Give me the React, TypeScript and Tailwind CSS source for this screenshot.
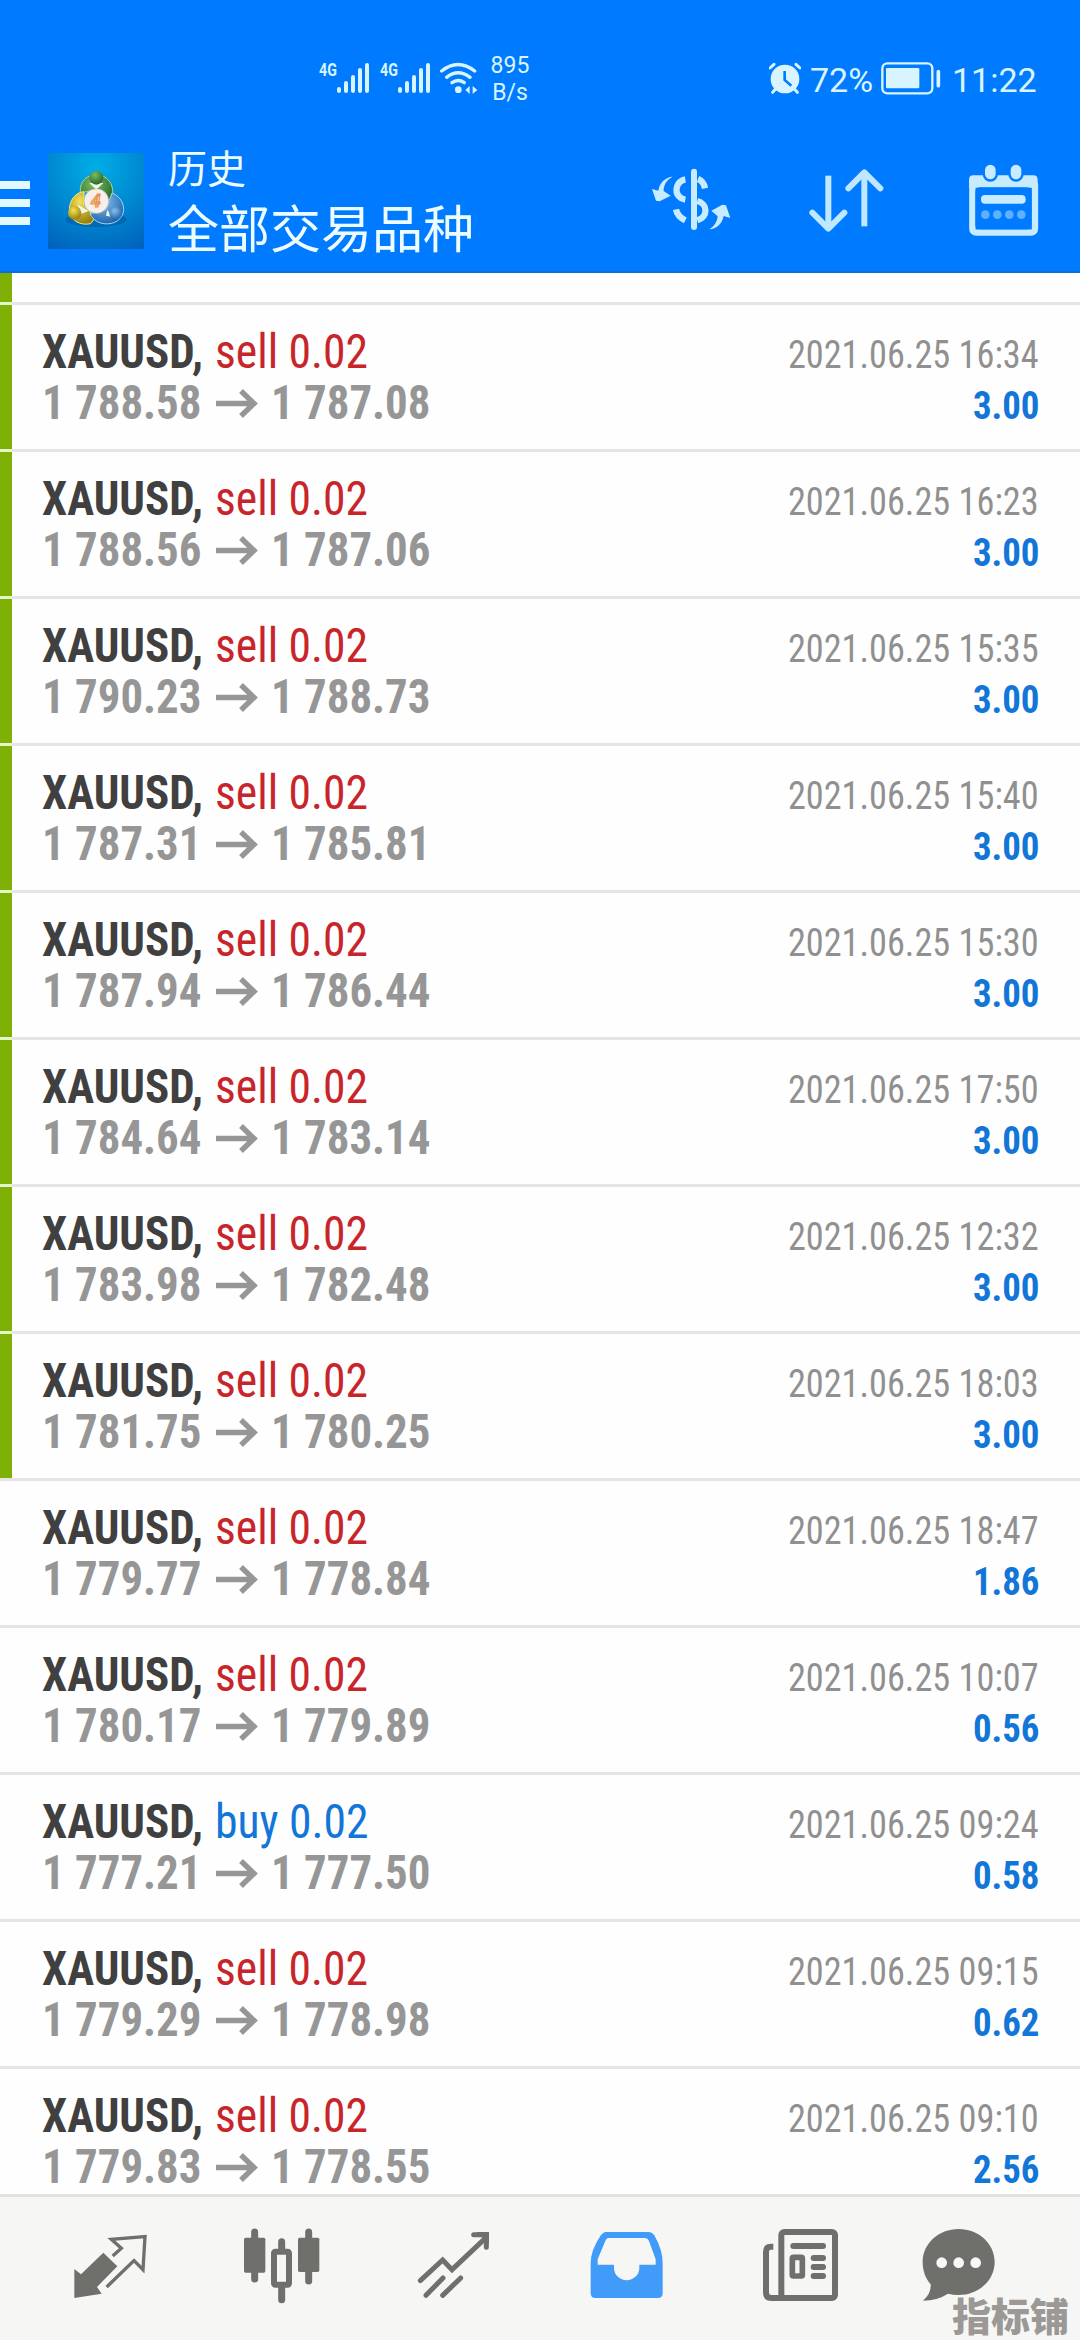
import React from "react";

type Trade = { side: "sell" | "buy"; open: string; close: string; time: string; profit: string; marked: boolean };

const trades: Trade[] = [
  { side: "sell", open: "1 788.58", close: "1 787.08", time: "16:34", profit: "3.00", marked: true },
  { side: "sell", open: "1 788.56", close: "1 787.06", time: "16:23", profit: "3.00", marked: true },
  { side: "sell", open: "1 790.23", close: "1 788.73", time: "15:35", profit: "3.00", marked: true },
  { side: "sell", open: "1 787.31", close: "1 785.81", time: "15:40", profit: "3.00", marked: true },
  { side: "sell", open: "1 787.94", close: "1 786.44", time: "15:30", profit: "3.00", marked: true },
  { side: "sell", open: "1 784.64", close: "1 783.14", time: "17:50", profit: "3.00", marked: true },
  { side: "sell", open: "1 783.98", close: "1 782.48", time: "12:32", profit: "3.00", marked: true },
  { side: "sell", open: "1 781.75", close: "1 780.25", time: "18:03", profit: "3.00", marked: true },
  { side: "sell", open: "1 779.77", close: "1 778.84", time: "18:47", profit: "1.86", marked: false },
  { side: "sell", open: "1 780.17", close: "1 779.89", time: "10:07", profit: "0.56", marked: false },
  { side: "buy", open: "1 777.21", close: "1 777.50", time: "09:24", profit: "0.58", marked: false },
  { side: "sell", open: "1 779.29", close: "1 778.98", time: "09:15", profit: "0.62", marked: false },
  { side: "sell", open: "1 779.83", close: "1 778.55", time: "09:10", profit: "2.56", marked: false },
];

function Signal() {
  return (
    <div className="flex h-[31px] w-[50px]">
      <span className="w-[18px] origin-left scale-x-75 text-[19px] font-bold leading-[16px]">4G</span>
      <svg className="h-[31px] w-[32px]" viewBox="0 0 32 31" stroke="currentColor" strokeWidth="4" strokeLinecap="round">
        <path d="M2 27v2M9 21v8M16 15v14M23 8v21M30 3v26" />
      </svg>
    </div>
  );
}

function StatusBar() {
  return (
    <div className="flex h-[130px] items-start pt-[62px] text-[#d8f5ff]">
      <div className="ml-[319px] flex gap-[11px]">
        <Signal />
        <Signal />
      </div>
      <svg className="ml-[10px] h-[32px] w-[39px]" viewBox="0 0 117 96" fill="none" stroke="currentColor" strokeWidth="10" strokeLinecap="round">
        <path d="M5 27Q54-12 104 27M20 46Q54 19 90 46M36 62Q54 49 73 62" />
        <circle cx="55" cy="83" r="10" fill="currentColor" stroke="none" />
        <path d="M76 84l13-12v24zM98 72v24l14-12z" fill="currentColor" stroke="none" />
      </svg>
      <div className="-mt-[10px] ml-[11px] flex w-[40px] flex-col items-center text-[23px] leading-[27px]">
        <span>895</span>
        <span>B/s</span>
      </div>
      <svg className="ml-[239px] h-[32px] w-[32px]" viewBox="84 66 96 96">
        <circle cx="132" cy="117" r="43" fill="currentColor" />
        <path d="M87 84l12-11M165 73l12 11M103 148l-8 9M161 148l8 9" stroke="currentColor" strokeWidth="9" strokeLinecap="round" />
        <path d="M131 93v27l20 17" fill="none" stroke="#007aff" strokeWidth="8" />
      </svg>
      <span className="-mt-[1px] ml-[9px] w-[66px] text-[34px] leading-[38px]">72%</span>
      <svg className="ml-[5px] h-[33px] w-[60px]" viewBox="0 0 180 99" fill="none">
        <rect x="4" y="4" width="150" height="90" rx="15" stroke="currentColor" strokeWidth="7" />
        <rect x="15" y="18" width="100" height="61" rx="4" fill="currentColor" />
        <path d="M172 29v42" stroke="currentColor" strokeWidth="11" strokeLinecap="round" />
      </svg>
      <span className="-mt-[1px] ml-[11px] text-[34px] leading-[38px]">11:22</span>
    </div>
  );
}

function AppLogo() {
  return (
    <svg className="ml-[18px] h-[96px] w-[96px]" viewBox="144 68 288 288">
      <defs>
        <radialGradient id="bg" cx="0.5" cy="0.15" r="0.95">
          <stop offset="0" stopColor="#00aee6" />
          <stop offset="0.55" stopColor="#0086cf" />
          <stop offset="1" stopColor="#0062bd" />
        </radialGradient>
        <radialGradient id="gr" cx="0.4" cy="0.3" r="0.7"><stop offset="0" stopColor="#7cbb66" /><stop offset="1" stopColor="#246a2a" /></radialGradient>
        <radialGradient id="ye" cx="0.4" cy="0.3" r="0.7"><stop offset="0" stopColor="#f4e254" /><stop offset="1" stopColor="#98800f" /></radialGradient>
        <radialGradient id="bl" cx="0.4" cy="0.3" r="0.7"><stop offset="0" stopColor="#84c0ec" /><stop offset="1" stopColor="#1f66ae" /></radialGradient>
      </defs>
      <rect x="144" y="68" width="288" height="288" fill="url(#bg)" />
      <ellipse cx="288" cy="268" rx="92" ry="22" fill="#004f96" opacity="0.45" />
      <path d="M241 188C238 150 262 134 289 134C320 134 342 158 338 196C336 212 328 220 318 224L288 178Z" fill="url(#gr)" stroke="#a9d695" strokeWidth="3" />
      <path d="M252 184C226 186 208 210 208 240C212 274 244 286 272 280L286 262L252 226Z" fill="url(#ye)" stroke="#f0e890" strokeWidth="3" />
      <path d="M336 188C364 200 374 224 370 246C362 276 330 286 302 278C286 274 276 262 270 250L318 236Z" fill="url(#bl)" stroke="#a8d5f4" strokeWidth="3" />
      <path d="M268 158l21 20 21-20z" fill="#eef8e2" />
      <path d="M232 222l12 28 22-8zM322 238l14 22-18-4z" fill="#f2f6e0" />
      <circle cx="289" cy="142" r="21" fill="url(#gr)" />
      <circle cx="224" cy="248" r="20" fill="url(#ye)" />
      <circle cx="347" cy="249" r="19" fill="url(#bl)" />
      <circle cx="289" cy="212" r="37" fill="#f7f0ea" stroke="#b9b49c" strokeWidth="2" />
      <text x="287" y="231" fontSize="54" fontStyle="italic" fontWeight="700" textAnchor="middle" fill="#f6c79b" stroke="#e88d4c" strokeWidth="3" fontFamily="Roboto, sans-serif">4</text>
    </svg>
  );
}

function Header() {
  return (
    <header className="h-[273px] shrink-0 border-b-2 border-[#0870d8] bg-[#007aff]">
      <StatusBar />
      <div className="flex pt-[23px]">
        <div className="mt-[28px] flex w-[30px] flex-col gap-[10px]">
          <div className="h-[8px] bg-[#e2faff]" />
          <div className="h-[8px] bg-[#e2faff]" />
          <div className="h-[8px] bg-[#e2faff]" />
        </div>
        <AppLogo />
        <div className="-mt-[15px] ml-[24px] w-[483px] font-['Noto_Sans_CJK_SC',sans-serif] text-[#ecfcff]">
          <div className="text-[39px] leading-[56px]">历史</div>
          <div className="text-[51px] leading-[64px]">全部交易品种</div>
        </div>
        <svg className="mt-[14px] h-[64px] w-[80px] text-[#c8ecff]" viewBox="90 80 240 192" fill="none" stroke="currentColor">
          <path d="M219 94v166" strokeWidth="18" strokeLinecap="round" />
          <path d="M193 117C166 122 160 153 174 168Q181 176 193 178M231 116Q248 122 252 144M165 207Q169 228 193 240M229 182C261 190 262 230 229 240" strokeWidth="19" />
          <path d="M155 109C134 120 128 136 128 152L149 166 116 183 105 181 93 146 112 151C116 126 134 110 155 109Z" fill="currentColor" stroke="none" />
          <path d="M265 267C284 255 288 242 290 228L271 211 304 193 315 195 328 233 308 227C304 250 286 266 265 267Z" fill="currentColor" stroke="none" />
        </svg>
        <svg className="ml-[77px] mt-[14px] h-[66px] w-[76px] text-[#bfe8ff]" viewBox="563 80 228 198" fill="none" stroke="currentColor" strokeWidth="18" strokeLinecap="round" strokeLinejoin="round">
          <path d="M624 106V264" strokeLinecap="butt" />
          <path d="M576 217l48 48 48-48" />
          <path d="M732 258V97" strokeLinecap="butt" />
          <path d="M684 144l48-48 48 48" />
        </svg>
        <svg className="ml-[84px] mt-[10px] h-[74px] w-[72px]" viewBox="1040 68 216 222">
          <rect x="1053" y="123" width="188" height="154" rx="12" fill="none" stroke="#c8ecff" strokeWidth="19" />
          <path d="M1056 105H1236Q1249 105 1249 118V142H1043V118Q1043 105 1056 105Z" fill="#c8ecff" />
          <rect x="1062" y="141" width="168" height="126" rx="14" fill="#007aff" />
          <rect x="1084" y="66" width="46" height="58" rx="23" fill="#007aff" />
          <rect x="1161" y="66" width="46" height="58" rx="23" fill="#007aff" />
          <rect x="1091" y="73" width="32" height="44" rx="16" fill="#c8ecff" />
          <rect x="1168" y="73" width="32" height="44" rx="16" fill="#c8ecff" />
          <rect x="1079" y="164" width="134" height="26" rx="12" fill="#c8ecff" />
          <g fill="#5fb0ff">
            <circle cx="1092" cy="223" r="13" /><circle cx="1128" cy="223" r="13" /><circle cx="1164" cy="223" r="13" /><circle cx="1200" cy="223" r="13" />
          </g>
        </svg>
      </div>
    </header>
  );
}

function TradeRow({ t }: { t: Trade }) {
  return (
    <div className="flex h-[147px] shrink-0 flex-col">
      <div className="flex h-[3px]">
        <div className={t.marked ? "w-[12px] bg-[#e4f7c8]" : "w-[12px] bg-[#e5e5e5]"} />
        <div className="flex-1 bg-[#e5e5e5]" />
      </div>
      <div className="flex flex-1">
        <div className={t.marked ? "w-[12px] bg-[#7eb005]" : "w-[12px]"} />
        <div className="ml-[30px] flex-1 whitespace-nowrap pt-[21px] text-[48px] leading-[51px]">
          <div className="flex h-[51px]">
            <div className="w-[173px]">
              <span className="inline-block origin-left scale-x-[0.937] font-bold text-[#404040]">XAUUSD,</span>
            </div>
            <span className={t.side === "sell" ? "origin-left scale-x-[0.95] text-[#c8252b]" : "origin-left scale-x-[0.95] text-[#1275d8]"}>{t.side} 0.02</span>
          </div>
          <div className="flex h-[51px] font-bold text-[#969696]">
            <div className="w-[174px]">
              <span className="inline-block origin-left scale-x-[0.935]">{t.open}</span>
            </div>
            <svg className="mt-[12px] h-[30px] w-[42px]" viewBox="0 0 42 30" fill="none" stroke="currentColor" strokeWidth="5.4">
              <path d="M0 14.5h38M25 2l13 12.5L25 27" />
            </svg>
            <span className="ml-[13px] origin-left scale-x-[0.935]">{t.close}</span>
          </div>
        </div>
        <div className="mr-[41px] flex flex-col items-end whitespace-nowrap pt-[25px] text-[39px] leading-[51px]">
          <span className="origin-right scale-x-[0.93] text-[#909090]">2021.06.25 {t.time}</span>
          <span className="origin-right scale-x-[0.945] font-bold text-[#1275d8]">{t.profit}</span>
        </div>
      </div>
    </div>
  );
}

function TabBar() {
  return (
    <nav className="flex h-[146px] shrink-0 border-t-3 border-[#e2e2df] bg-[#f6f7f4] text-[#6f706b]">
      <svg className="ml-[73px] mt-[37px] h-[66px] w-[74px]" viewBox="219 192 222 198">
        <path d="M310 248l42 41-61 62 14 20-82 13V297l20 16z" fill="currentColor" />
        <path d="M338 258l26-23-30-27 101-8-6 99-27-27-82 79" fill="none" stroke="currentColor" strokeWidth="10" />
      </svg>
      <svg className="ml-[96px] mt-[31px] h-[76px] w-[77px]" viewBox="729 175 231 228" fill="none" stroke="currentColor">
        <path d="M764 187V328M926 187V334M845 216v26M845 350v40" strokeWidth="21" strokeLinecap="round" />
        <rect x="732" y="204" width="64" height="105" rx="5" fill="currentColor" stroke="none" />
        <rect x="894" y="204" width="64" height="103" rx="5" fill="currentColor" stroke="none" />
        <rect x="822" y="246" width="45" height="99" rx="4" strokeWidth="18" fill="#f6f7f4" />
      </svg>
      <svg className="ml-[97px] mt-[34px] h-[68px] w-[74px]" viewBox="171 183 222 204" fill="none" stroke="currentColor" strokeWidth="15" strokeLinecap="round">
        <path d="M181 332l67-62 28 29L378 203" />
        <path d="M341 194h38v38M198 376l51-52M248 376l54-52" />
        <path d="M350 186h37v37z" fill="currentColor" stroke="none" />
      </svg>
      <svg className="ml-[98px] mt-[34px] h-[68px] w-[76px]" viewBox="687 183 228 204">
        <path d="M736 186H868Q877 187 883 196Q908 240 908 280V370Q908 384 894 384H706Q692 384 692 370V280Q692 240 723 195Q729 187 736 186Z" fill="#419bf9" />
        <path d="M746 204H855Q863 204 867 213L887 268V284H838V293A38 38 0 0 1 762 293V284H713V268L736 213Q739 204 746 204Z" fill="#f6f7f4" />
      </svg>
      <svg className="ml-[97px] mt-[31px] h-[74px] w-[78px]" viewBox="125 174 234 222" fill="none" stroke="currentColor" strokeWidth="18">
        <rect x="183" y="186" width="161" height="198" rx="9" />
        <path d="M159 230H151Q137 230 137 246V368Q137 384 153 384H190" />
        <path d="M219 228h89M280 264h28M280 291h28M280 318h28" strokeLinecap="round" />
        <rect x="216" y="262" width="30" height="56" rx="3" strokeWidth="17" />
      </svg>
      <svg className="ml-[82px] mt-[31px] h-[74px] w-[74px]" viewBox="604 174 222 222">
        <path d="M714 177C774 177 822 221 822 276C822 331 774 375 714 375Q697 375 682 371Q650 392 607 392Q632 370 630 343C614 325 606 302 606 276C606 221 654 177 714 177Z" fill="currentColor" />
        <g fill="#f8f9f6"><circle cx="663" cy="278" r="16" /><circle cx="714" cy="278" r="16" /><circle cx="765" cy="278" r="16" /></g>
      </svg>
    </nav>
  );
}

export default function App() {
  return (
    <div className="relative flex h-[2340px] w-[1080px] flex-col overflow-hidden bg-[#fefefe] font-['Roboto_Condensed',Roboto,sans-serif]">
      <div className="font-[Roboto,sans-serif]"><Header /></div>
      <main className="flex min-h-0 flex-1 flex-col overflow-hidden [font-stretch:75%]">
        <div className="h-[29px] w-[12px] shrink-0 bg-[#7eb005]" />
        {trades.map((t) => (
          <TradeRow key={t.time} t={t} />
        ))}
      </main>
      <TabBar />
      <div className="absolute bottom-[4px] right-[11px] font-['Noto_Sans_CJK_SC',sans-serif] text-[39px] font-black leading-[44px] text-[#9c9896]">指标铺</div>
    </div>
  );
}
